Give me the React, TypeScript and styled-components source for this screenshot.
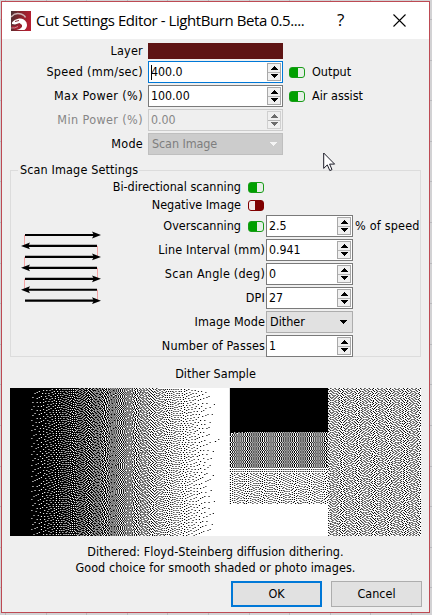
import React, { useMemo } from "react";
import styled, { createGlobalStyle, css } from "styled-components";

const GlobalStyle = createGlobalStyle`
  * { box-sizing: border-box; }
  html, body { margin: 0; padding: 0; overflow: hidden; }
  body { background: #d3d2d6; }
`;

const Desktop = styled.div`
  width: 432px;
  height: 615px;
  padding: 1px 2px 2px 1px;
  background-color: #d2d2d4;
  background-image:
    repeating-linear-gradient(to right, transparent 0 5px, #b9b9bd 5px 6px, transparent 6px 40.6px),
    repeating-linear-gradient(to bottom, transparent 0 19px, #b9b9bd 19px 20px, transparent 20px 40.6px);
  font-family: "DejaVu Sans Condensed", "DejaVu Sans", Tahoma, sans-serif;
  font-stretch: condensed;
  font-size: 12.5px;
  line-height: 16px;
  color: #000;
`;

const Dialog = styled.main`
  display: flex;
  flex-direction: column;
  width: 429px;
  height: 612px;
  border: 1px solid #bd4a53;
  background: #efefef;
`;

const TitleBar = styled.header`
  display: flex;
  align-items: center;
  height: 37px;
  flex: none;
  padding: 0 23px 0 9px;
  background: #fff;
`;

const Title = styled.h1`
  margin: 0 0 1px 5px;
  width: 280px;
  font: 400 15px/22px "Open Sans", "Noto Sans", sans-serif;
  letter-spacing: -0.42px;
  white-space: nowrap;
`;

const HelpButton = styled.button`
  width: 12px;
  margin: 0 0 1px 21px;
  padding: 0;
  border: 0;
  background: none;
  color: #000;
  font: 400 17px/22px "Open Sans", sans-serif;
  text-align: left;
`;

const CloseButton = styled.button`
  display: flex;
  margin: 0 0 0 auto;
  padding: 0;
  border: 0;
  background: none;
`;

const Label = styled.span<{ $muted?: boolean; $spacing?: number }>`
  white-space: nowrap;
  letter-spacing: ${(p) => p.$spacing ?? 0}px;
  color: ${(p) => (p.$muted ? "#868686" : "#000")};
`;

const LayerSettings = styled.section`
  display: grid;
  grid-template-columns: 141px 135px 1fr;
  column-gap: 5px;
  row-gap: 2px;
  grid-template-rows: 16px repeat(4, 22px);
  padding: 4px 8px 0 0;
  align-items: center;
`;

const FieldLabel = styled(Label)`
  justify-self: end;
`;

const Swatch = styled.div`
  height: 16px;
  background: #5e1414;
`;

const ToggleField = styled.label`
  display: flex;
  align-items: center;
  gap: 7px;
  padding-left: 1px;
`;

const ToggleBox = styled.span<{ $on: boolean }>`
  display: block;
  flex: none;
  width: 16px;
  height: 11px;
  border: 1px solid ${(p) => (p.$on ? "#189c18" : "#800000")};
  border-radius: 3px;
  background: ${(p) =>
    p.$on
      ? "linear-gradient(to right, #00a000 8px, #e6efe6 8px)"
      : "linear-gradient(to right, #f1e8e8 6px, #800000 6px)"};
`;

const Field = styled.div<{ $state?: "focus" | "disabled" }>`
  display: flex;
  align-items: center;
  height: 22px;
  padding: 1px 1px 1px 2px;
  border: 1px solid #7a7a7a;
  background: #fff;
  ${(p) => p.$state === "focus" && css`border-color: #0078d7;`}
  ${(p) => p.$state === "disabled" && css`border-color: #ccc; background: #efefef; color: #868686;`}
`;

const Value = styled.span`
  flex: 1;
  font-size: 12.3px;
  white-space: nowrap;
`;

const Caret = styled.span`
  width: 1px;
  height: 15px;
  margin-right: -1px;
  background: #000;
`;

const Steppers = styled.span<{ $disabled?: boolean }>`
  display: flex;
  flex-direction: column;
  width: 14px;
  height: 18px;
  border: 1px solid ${(p) => (p.$disabled ? "#d0d0d0" : "#a8a8a8")};
  background: #f0f0f0;
  color: ${(p) => (p.$disabled ? "#6d6d6d" : "#000")};
`;

const Step = styled.button`
  display: flex;
  flex: 1;
  align-items: center;
  justify-content: center;
  min-height: 0;
  padding: 0;
  border: 0;
  background: none;
  color: inherit;
  & + & { border-top: 1px solid #b4b4b4; }
`;

const Combo = styled.div<{ $disabled?: boolean }>`
  display: flex;
  align-items: center;
  justify-content: space-between;
  height: 22px;
  padding: 0 5px 0 3px;
  border: 1px solid ${(p) => (p.$disabled ? "#bfbfbf" : "#adadad")};
  background: ${(p) => (p.$disabled ? "#ccc" : "#e1e1e1")};
  color: ${(p) => (p.$disabled ? "#7e7e7e" : "#000")};
  letter-spacing: ${(p) => (p.$disabled ? "-0.1px" : "0")};
`;

const Panel = styled.section`
  display: flex;
  flex-direction: column;
  flex: none;
  width: 411px;
  height: 195px;
  margin: 7px 0 0 8px;
`;

const PanelHeader = styled.div`
  display: flex;
  align-items: center;
  height: 16px;
  margin-bottom: -8px;
  z-index: 1;
  &::before { content: ""; width: 8px; }
`;

const PanelTitle = styled.h2`
  margin: 0;
  padding: 0 1px 0 2px;
  background: #efefef;
  font: inherit;
  letter-spacing: 0.13px;
  white-space: nowrap;
`;

const PanelBody = styled.div`
  display: grid;
  grid-template-columns: 90px 163px 87px 1fr;
  column-gap: 1px;
  height: 187px;
  border: 1px solid #dcdcdc;
`;

const DiagramCell = styled.div`
  padding: 59px 0 0 10px;
`;

const Names = styled.div`
  display: flex;
  flex-direction: column;
  align-items: flex-end;
  padding-top: 7px;
`;

const NameRow = styled.div<{ $height: number }>`
  display: flex;
  align-items: center;
  justify-content: flex-end;
  gap: 7px;
  height: ${(p) => p.$height}px;
  ${ToggleBox} { margin-right: 1px; }
`;

const Fields = styled.div`
  display: flex;
  flex-direction: column;
  gap: 2px;
  padding-top: 44px;
  margin-bottom: -1px;
`;

const Suffix = styled.div`
  padding: 47px 0 0 1px;
`;

const Sample = styled.figure`
  display: flex;
  flex-direction: column;
  align-items: center;
  width: 411px;
  margin: 9px 0 0 8px;
`;

const SampleCaption = styled.figcaption`
  height: 22px;
`;

const Description = styled.p`
  margin: 8px 0 0;
  text-align: center;
  letter-spacing: 0.04px;
`;

const Actions = styled.footer`
  display: flex;
  justify-content: flex-end;
  gap: 9px;
  padding: 5px 7px 0 0;
`;

const ActionButton = styled.button<{ $primary?: boolean }>`
  width: 91px;
  height: 26px;
  padding: 0;
  border: ${(p) => (p.$primary ? "2px solid #0078d7" : "1px solid #adadad")};
  background: #e1e1e1;
  color: #000;
  font: inherit;
`;

const PointerLayer = styled.div`
  position: absolute;
  left: 323px;
  top: 152px;
  line-height: 0;
`;

const Triangle = ({ up = false, fill = "currentColor" }: { up?: boolean; fill?: string }) => (
  <svg width="7" height="4" viewBox="0 0 7 4" shapeRendering="crispEdges">
    <path d={up ? "M3 0h1v1h1v1h1v1h1v1H0V3h1V2h1V1h1z" : "M0 0h7v1H6v1H5v1H4v1H3V3H2V2H1V1H0z"} fill={fill} />
  </svg>
);

function SpinBox({ value, state }: { value: string; state?: "focus" | "disabled" }) {
  return (
    <Field $state={state}>
      {state === "focus" && <Caret />}
      <Value>{value}</Value>
      <Steppers $disabled={state === "disabled"}>
        <Step><Triangle up /></Step>
        <Step><Triangle /></Step>
      </Steppers>
    </Field>
  );
}

function AppIcon() {
  return (
    <svg width="20" height="20" viewBox="0 0 20 20">
      <defs>
        <linearGradient id="badge" x1="0" y1="0" x2="1" y2="0.2">
          <stop offset="0" stopColor="#493336" />
          <stop offset="0.5" stopColor="#87232c" />
          <stop offset="1" stopColor="#b51f32" />
        </linearGradient>
      </defs>
      <rect width="20" height="20" fill="url(#badge)" />
      <path d="M0 6C3 2.5 7 2 10 3C12.5 3.8 14 5 14.5 6.5" fill="none" stroke="#cdb4b6" strokeWidth="1.4" />
      <path d="M1 11.5Q3 8.5 8 7.5Q13 7 15.5 11.5Q17 16 13.5 19H5Q12 17.5 11 14L8.5 12L4 13.5L1 13z" fill="#fff" />
      <path d="M0 15L5 15L8 13L10 15Q8 18 4 19" fill="#a52031" />
      <path d="M0 17Q4 17.5 7 15.5" fill="none" stroke="#d9a3a8" strokeWidth="0.8" />
      <path d="M4 10.5L8 9.5" stroke="#843039" />
    </svg>
  );
}

function ScanDiagram() {
  const rows = [0, 1, 2, 3, 4, 5, 6];
  return (
    <svg width="80" height="74" viewBox="0 0 80 74">
      {rows.slice(0, 6).map((i) => (
        <path key={i} d={`M${i % 2 ? 76.5 : 3.5} ${5 + i * 10.95}v11`} stroke="#f4a3a3" />
      ))}
      {rows.map((i) => {
        const y = 5 + i * 10.95;
        return i % 2 ? (
          <g key={i}>
            <path d={`M6 ${y}H76`} stroke="#000" strokeWidth="2.2" />
            <path d={`M0 ${y}l9-3.4-1.8 3.4 1.8 3.4z`} />
          </g>
        ) : (
          <g key={i}>
            <path d={`M4 ${y}H74`} stroke="#000" strokeWidth="2.2" />
            <path d={`M80 ${y}l-9-3.4 1.8 3.4-1.8 3.4z`} />
          </g>
        );
      })}
    </svg>
  );
}

const SRC_W = 385;
const OUT_W = 411;
const OUT_H = 148;

/* Brightness of the test card: a ramp, four stacked patches and a flat tone. */
function tone(x: number, y: number): number {
  const px = (x * OUT_W) / SRC_W;
  if (px < 219.8) return Math.max(0, Math.min(0.997, (px - 13) / 194));
  if (px < 317.5) {
    if (y < 44) return 0;
    if (y < 80) return 0.5;
    if (y < 116) return 0.77;
    return 1;
  }
  return 0.69;
}

function ditherPaths(): { level: number; d: string }[] {
  const buf = new Float32Array(SRC_W * OUT_H);
  for (let y = 0; y < OUT_H; y++) for (let x = 0; x < SRC_W; x++) buf[y * SRC_W + x] = tone(x, y);
  for (let y = 0; y < OUT_H; y++) {
    for (let x = 0; x < SRC_W; x++) {
      const i = y * SRC_W + x;
      const bit = buf[i] >= 0.5 ? 1 : 0;
      const err = buf[i] - bit;
      buf[i] = bit;
      if (x + 1 < SRC_W) buf[i + 1] += (err * 7) / 16;
      if (y + 1 < OUT_H) {
        if (x > 0) buf[i + SRC_W - 1] += (err * 3) / 16;
        buf[i + SRC_W] += (err * 5) / 16;
        if (x + 1 < SRC_W) buf[i + SRC_W + 1] += err / 16;
      }
    }
  }
  const steps = 8;
  const paths: string[] = Array(steps).fill("");
  for (let y = 0; y < OUT_H; y++) {
    let start = 0;
    let prev = -1;
    for (let x = 0; x <= OUT_W; x++) {
      let level = -1;
      if (x < OUT_W) {
        const s = Math.max(0, ((x + 0.5) * SRC_W) / OUT_W - 0.5);
        const a = Math.floor(s);
        const b = Math.min(SRC_W - 1, a + 1);
        const f = s - a;
        level = Math.round((buf[y * SRC_W + a] * (1 - f) + buf[y * SRC_W + b] * f) * steps);
      }
      if (level !== prev) {
        if (prev >= 0 && prev < steps) paths[prev] += `M${start} ${y}h${x - start}v1H${start}z`;
        start = x;
        prev = level;
      }
    }
  }
  return paths.map((d, i) => ({ level: Math.round((i / steps) * 255), d }));
}

function DitherSample() {
  const paths = useMemo(ditherPaths, []);
  return (
    <svg width={OUT_W} height={OUT_H} viewBox={`0 0 ${OUT_W} ${OUT_H}`} shapeRendering="crispEdges">
      <rect width={OUT_W} height={OUT_H} fill="#fff" />
      {paths.map((p) => (
        <path key={p.level} d={p.d} fill={`rgb(${p.level},${p.level},${p.level})`} />
      ))}
    </svg>
  );
}

export default function App() {
  return (
    <Desktop>
      <GlobalStyle />
      <Dialog>
        <TitleBar>
          <AppIcon />
          <Title>Cut Settings Editor - LightBurn Beta 0.5....</Title>
          <HelpButton>?</HelpButton>
          <CloseButton aria-label="Close">
            <svg width="13" height="13" viewBox="0 0 13 13">
              <path d="M.5 .5l12 12M12.5 .5l-12 12" stroke="#000" strokeWidth="1.1" />
            </svg>
          </CloseButton>
        </TitleBar>

        <LayerSettings>
          <FieldLabel $spacing={0.25}>Layer</FieldLabel>
          <Swatch />
          <span />
          <FieldLabel $spacing={0.31}>Speed (mm/sec)</FieldLabel>
          <SpinBox value="400.0" state="focus" />
          <ToggleField><ToggleBox $on /><Label>Output</Label></ToggleField>
          <FieldLabel $spacing={0.4}>Max Power (%)</FieldLabel>
          <SpinBox value="100.00" />
          <ToggleField><ToggleBox $on /><Label>Air assist</Label></ToggleField>
          <FieldLabel $muted $spacing={0.4}>Min Power (%)</FieldLabel>
          <SpinBox value="0.00" state="disabled" />
          <span />
          <FieldLabel $spacing={0.25}>Mode</FieldLabel>
          <Combo $disabled>Scan Image<Triangle fill="#f4f4f4" /></Combo>
          <span />
        </LayerSettings>

        <Panel>
          <PanelHeader><PanelTitle>Scan Image Settings</PanelTitle></PanelHeader>
          <PanelBody>
            <DiagramCell><ScanDiagram /></DiagramCell>
            <Names>
              <NameRow $height={18}><Label>Bi-directional scanning</Label><ToggleBox $on /></NameRow>
              <NameRow $height={18}><Label>Negative Image</Label><ToggleBox $on={false} /></NameRow>
              <NameRow $height={24}><Label>Overscanning</Label><ToggleBox $on /></NameRow>
              <NameRow $height={24}><Label $spacing={0.13}>Line Interval (mm)</Label></NameRow>
              <NameRow $height={24}><Label $spacing={0.23}>Scan Angle (deg)</Label></NameRow>
              <NameRow $height={24}><Label $spacing={0.2}>DPI</Label></NameRow>
              <NameRow $height={24}><Label $spacing={0.1}>Image Mode</Label></NameRow>
              <NameRow $height={24}><Label $spacing={0.15}>Number of Passes</Label></NameRow>
            </Names>
            <Fields>
              <SpinBox value="2.5" />
              <SpinBox value="0.941" />
              <SpinBox value="0" />
              <SpinBox value="27" />
              <Combo>Dither<Triangle /></Combo>
              <SpinBox value="1" />
            </Fields>
            <Suffix><Label $spacing={0.2}>% of speed</Label></Suffix>
          </PanelBody>
        </Panel>

        <Sample>
          <SampleCaption>Dither Sample</SampleCaption>
          <DitherSample />
          <Description>
            Dithered: Floyd-Steinberg diffusion dithering.<br />
            Good choice for smooth shaded or photo images.
          </Description>
        </Sample>

        <Actions>
          <ActionButton $primary>OK</ActionButton>
          <ActionButton>Cancel</ActionButton>
        </Actions>
      </Dialog>
      <PointerLayer>
        <svg width="13" height="20" viewBox="0 0 13 20">
          <path d="M.7 1v15.4l3.6-3.5 2.5 5.7 2.2-1-2.4-5.5h5z" fill="#fff" stroke="#1c1c28" strokeWidth="1" />
        </svg>
      </PointerLayer>
    </Desktop>
  );
}
